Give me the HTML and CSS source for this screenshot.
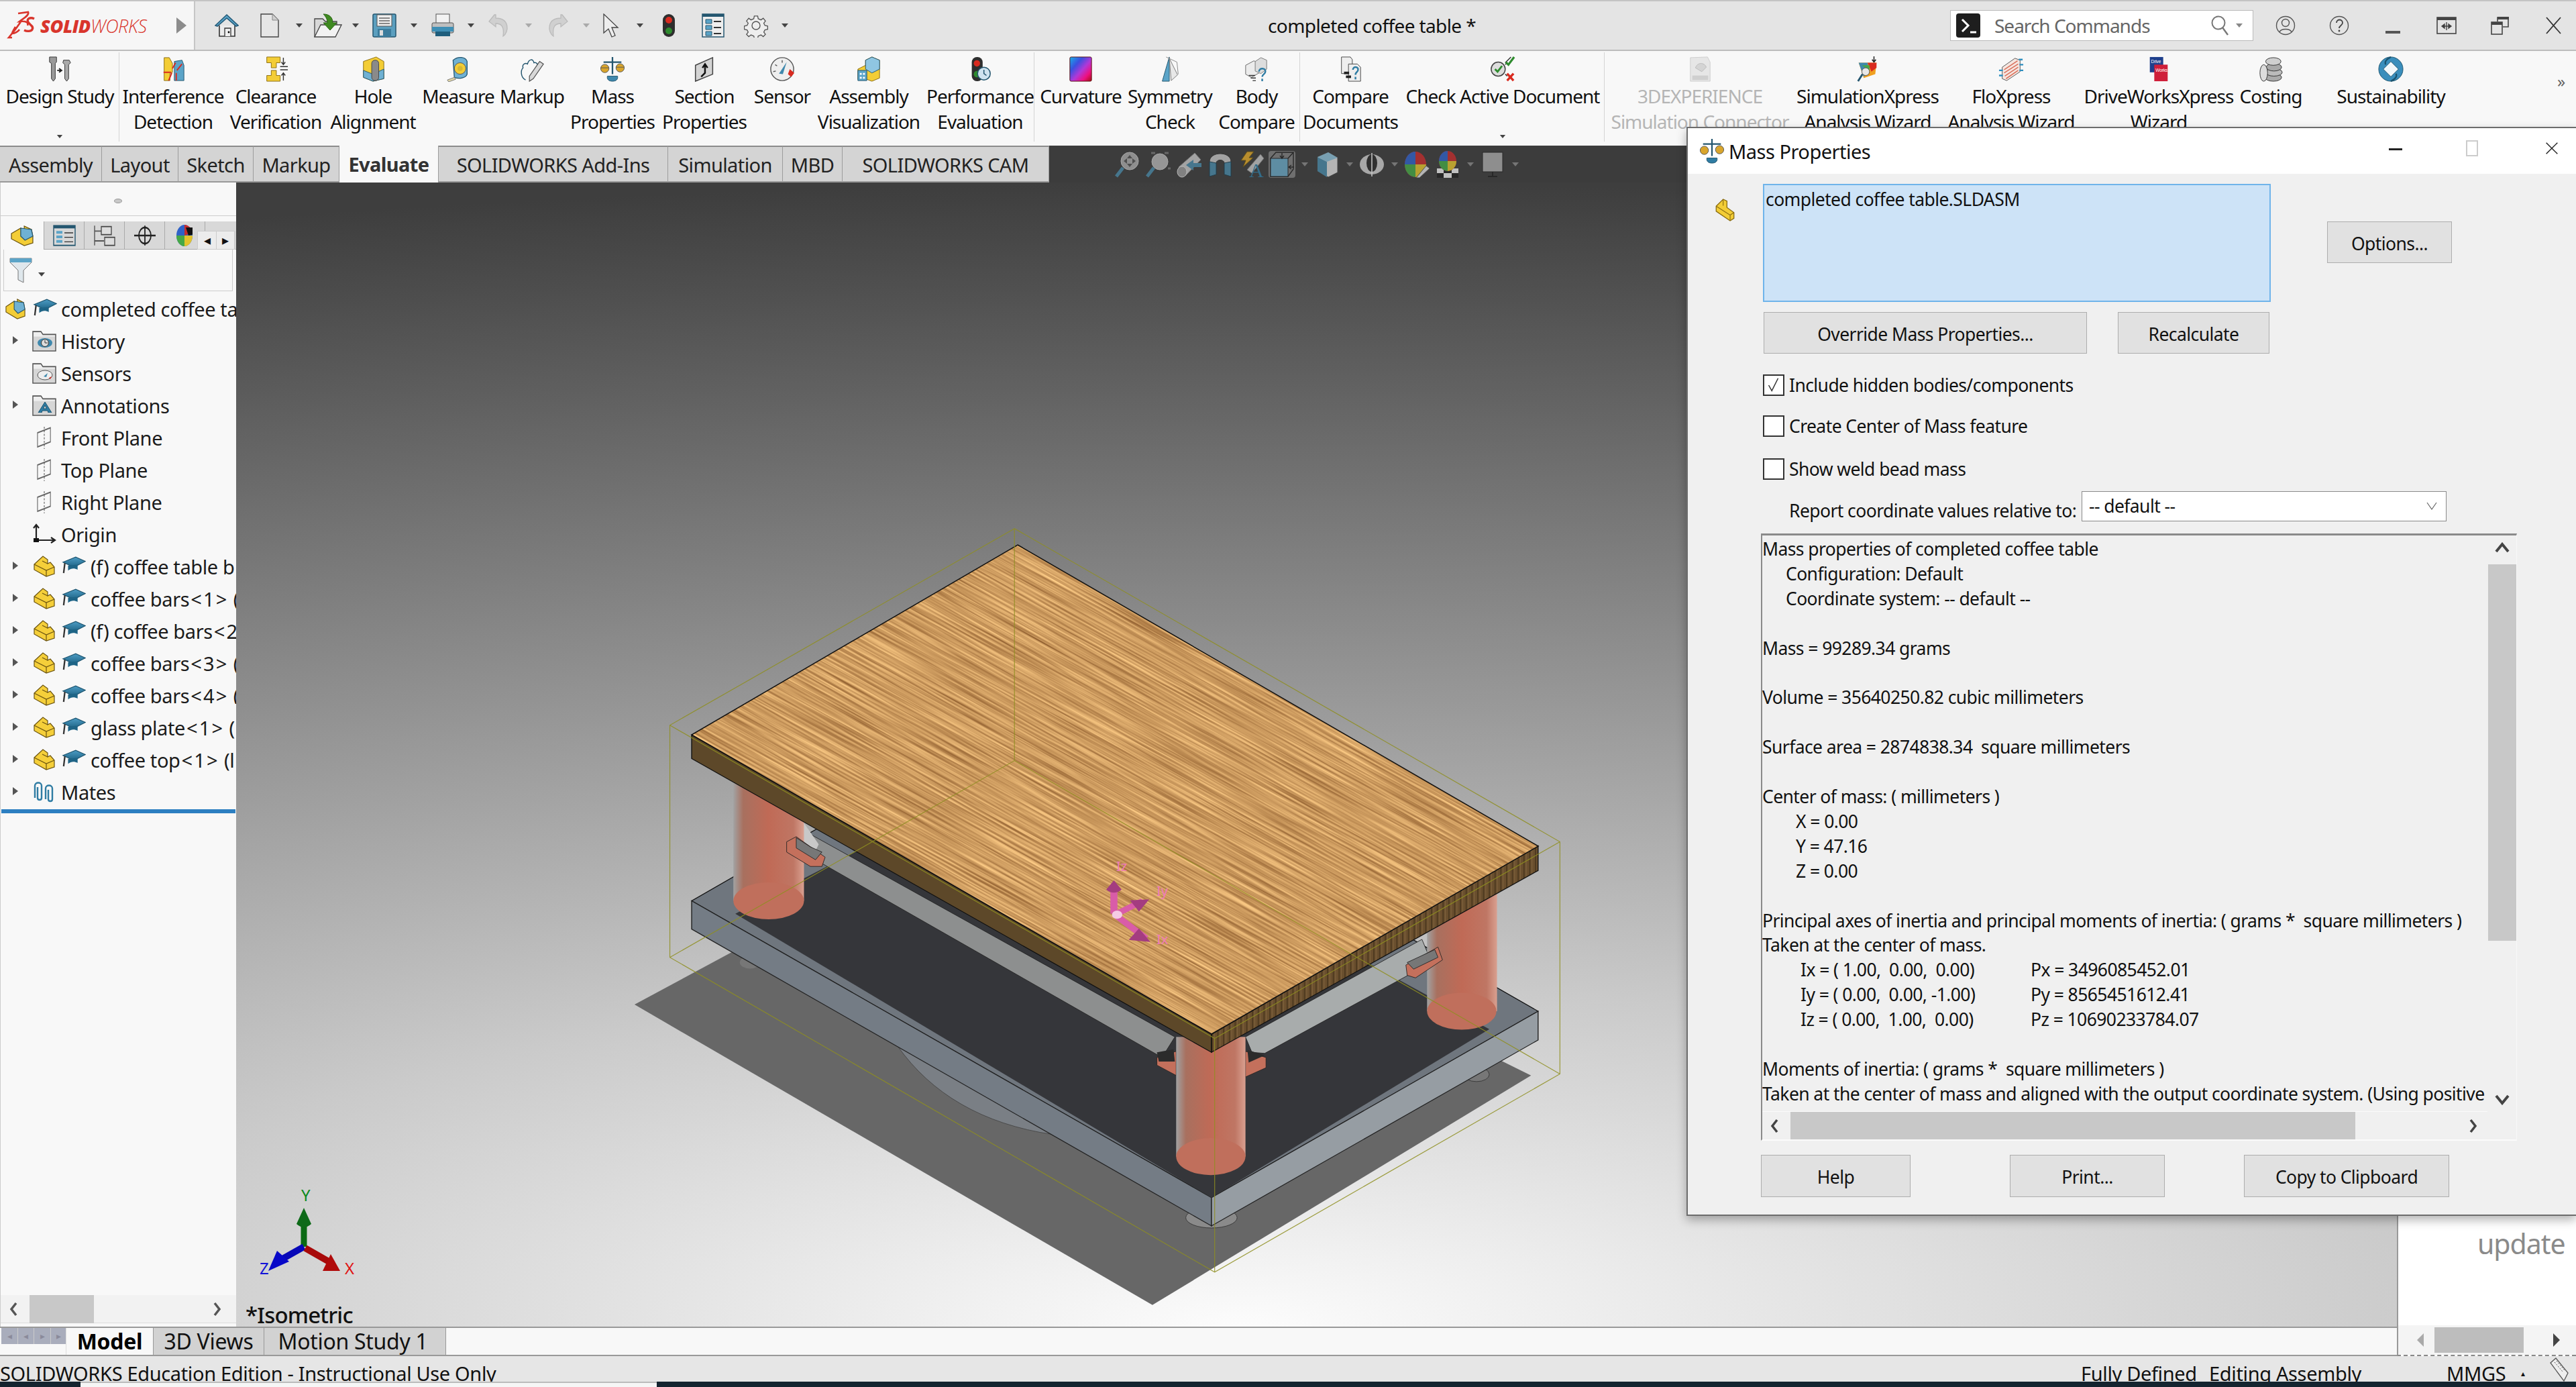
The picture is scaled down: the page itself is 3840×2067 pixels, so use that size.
FILE: index.html
```html
<!DOCTYPE html>
<html lang="en">
<head>
<meta charset="utf-8">
<title>SOLIDWORKS - completed coffee table</title>
<link rel="stylesheet" href="styles.css">
</head>
<body>
<svg class="defs" aria-hidden="true">
  <defs>
    <linearGradient id="capg" x1="0" y1="0" x2="0" y2="1"><stop offset="0" stop-color="#4d9cc4"/><stop offset="1" stop-color="#1e6486"/></linearGradient>
    <linearGradient id="rainbow" x1="0" y1="0" x2="1" y2="1"><stop offset="0" stop-color="#19b0e8"/><stop offset=".3" stop-color="#3a50e0"/><stop offset=".55" stop-color="#b038d8"/><stop offset=".78" stop-color="#ee1080"/><stop offset="1" stop-color="#a01010"/></linearGradient>
    <linearGradient id="cyl" x1="0" y1="0" x2="1" y2="0"><stop offset="0" stop-color="#a2a2a2"/><stop offset=".14" stop-color="#a8705f"/><stop offset=".5" stop-color="#c06a56"/><stop offset=".85" stop-color="#bf7664"/><stop offset="1" stop-color="#d9a090"/></linearGradient>
    <pattern id="edge" width="9" height="40" patternUnits="userSpaceOnUse"><rect width="9" height="40" fill="#6a4f2e"/><rect x="2" width="2" height="40" fill="#4e3a20"/><rect x="6" width="1" height="40" fill="#80643e"/></pattern>
    <filter id="woodgrain" x="0" y="0" width="100%" height="100%" color-interpolation-filters="sRGB">
      <feTurbulence type="fractalNoise" baseFrequency="0.006 0.36" numOctaves="3" seed="7"/>
      <feColorMatrix type="matrix" values=".6 0 0 0 .5  .6 0 0 0 .305  .48 0 0 0 .13  0 0 0 0 1"/>
    </filter>
    <clipPath id="topclip"><polygon points="1517,812 2293,1261 1806,1541 1031,1095"/></clipPath>
    <symbol id="comp" viewBox="0 0 32 32" preserveAspectRatio="none"><path d="M1 13 14 1l7 5v6l4-2 6 7v10l-12 4L1 21z" fill="#f5cf3a" stroke="#6b5410" stroke-width="1.2"/><path d="M1 13l18 9 12-5M19 22v9M13 8l8 4" fill="none" stroke="#6b5410" stroke-width="1.2"/></symbol>
    <symbol id="cap" viewBox="0 0 38 24" preserveAspectRatio="none"><path d="M2 7 22 1l15 5-18 7z" fill="url(#capg)" stroke="#1b536e"/><path d="M10 11v6c5-3 10-3 15-1v-6z" fill="#1e6486"/><path d="M5 8 3 20" stroke="#333" stroke-width="2.4"/></symbol>
    <symbol id="folder" viewBox="0 0 36 30" preserveAspectRatio="none"><path d="M1 29V2h12l3 4h19v23z" fill="#eee" stroke="#555" stroke-width="1.5"/><path d="M2 9h32v19H2z" fill="#d6d6d6"/></symbol>
    <symbol id="plane" viewBox="0 0 24 22" preserveAspectRatio="none"><path d="M1 6 22 1v14L1 20z" fill="none" stroke="#666" stroke-width="1.2"/><path d="M12 0v22" fill="none" stroke="#444" stroke-dasharray="2 1.5"/></symbol>
    <symbol id="arrowdn" viewBox="0 0 12 8"><path d="M1 1h10L6 7z"/></symbol>
  </defs>
</svg>

<header class="topbar">
  <div class="logo">
    <svg class="ds" viewBox="0 0 42 44"><path d="M17 4 32 2c2 5-8 10-13 14 9-1 14 1 12 6M22 15C16 24 10 32 3 40l5 0M13 24c-3 5-5 8-5 10 4 0 9-3 11-6" fill="none" stroke="#d9352c" stroke-width="2.6"/><path d="M41 12c-6-3-12 0-9 5 2 4 9 6 6 11-2 3-8 3-12 1" fill="none" stroke="#d9352c" stroke-width="3.4"/></svg>
    <span class="logo-b">SOLID</span><span class="logo-l">WORKS</span>
    <span class="logo-tri"></span>
  </div>
  <div class="quick">
    <svg class="qi qi-home" viewBox="0 0 36 36"><path d="M7 18v16h23V18" fill="#ececec" stroke="#333" stroke-width="1.6"/><path d="M1 18 18 2l17 16-3 1L18 7 4 19z" fill="#5ba4c8" stroke="#245a78" stroke-width="1.6"/><path d="M15 34V22h9v12" fill="#eee" stroke="#333" stroke-width="1.3"/><circle cx="21" cy="28" r="1.4"/></svg>
    <svg class="qi qi-new" viewBox="0 0 28 36"><path d="M1 1h17l9 9v25H1z" fill="#e6e6e6" stroke="#444" stroke-width="1.4"/><path d="M18 1v9h9" fill="#cfcfcf" stroke="#888"/></svg>
    <svg class="qa" viewBox="0 0 12 8"><use href="#arrowdn"/></svg>
    <svg class="qi qi-open" viewBox="0 0 42 36"><path d="M1 35V8h12l4 4h17v8" fill="#d8d8d8" stroke="#444" stroke-width="1.3"/><path d="M1 35 10 17h31l-9 18z" fill="#f2f2f2" stroke="#444" stroke-width="1.3"/><path d="M14 1c10 0 14 6 14 13h6l-10 11-10-11h6c0-5-2-9-6-13z" fill="#3f8a21" stroke="#2a6612"/></svg>
    <svg class="qa" viewBox="0 0 12 8"><use href="#arrowdn"/></svg>
    <svg class="qi qi-save" viewBox="0 0 36 36"><rect x="1" y="1" width="34" height="34" rx="2" fill="#5b9fbf" stroke="#24566f" stroke-width="1.5"/><rect x="7" y="2" width="22" height="17" fill="#eee" stroke="#555"/><path d="M10 7h16M10 11h16M10 15h16" stroke="#666" stroke-width="1.4"/><rect x="8" y="23" width="20" height="12" fill="#3c7c9c"/><rect x="11" y="25" width="5" height="8" fill="#ddd"/></svg>
    <svg class="qa" viewBox="0 0 12 8"><use href="#arrowdn"/></svg>
    <svg class="qi qi-print" viewBox="0 0 34 36"><rect x="7" y="1" width="20" height="14" fill="#f2f2f2" stroke="#555"/><rect x="1" y="14" width="32" height="15" rx="2" fill="#bfbfbf" stroke="#555"/><rect x="1" y="20" width="32" height="7" fill="#3f8fb5"/><rect x="6" y="27" width="22" height="7" fill="#1f5e7d"/></svg>
    <svg class="qa" viewBox="0 0 12 8"><use href="#arrowdn"/></svg>
    <svg class="qi qi-undo" viewBox="0 0 34 36"><path d="M10 2 2 12l10 8v-5c8 0 13 4 11 19 9-6 10-27-11-27V2z" fill="#d0d0d0" stroke="#bbb" stroke-width="1.3"/></svg>
    <svg class="qa faded" viewBox="0 0 12 8"><use href="#arrowdn"/></svg>
    <svg class="qi qi-redo" viewBox="0 0 34 36"><path d="M24 2 32 12l-10 8v-5c-8 0-13 4-11 19C2 28 1 7 22 7V2z" fill="#d0d0d0" stroke="#bbb" stroke-width="1.3"/></svg>
    <svg class="qa faded" viewBox="0 0 12 8"><use href="#arrowdn"/></svg>
    <svg class="qi qi-sel" viewBox="0 0 26 36"><path d="M2 1v28l7-6 5 12 5-2-5-12h9z" fill="#eee" stroke="#444" stroke-width="1.3"/></svg>
    <svg class="qa" viewBox="0 0 12 8"><use href="#arrowdn"/></svg>
    <svg class="qi qi-light" viewBox="0 0 20 36"><rect x="1" y="1" width="18" height="34" rx="9" fill="#2e2e2e"/><circle cx="10" cy="10" r="5" fill="#d92b20"/><circle cx="10" cy="26" r="5" fill="#2e8b2e"/></svg>
    <svg class="qi qi-list" viewBox="0 0 34 36"><rect x="1" y="1" width="32" height="34" fill="#eee" stroke="#24566f" stroke-width="1.5"/><rect x="1" y="1" width="32" height="4" fill="#24566f"/><path d="M6 9h9v6H6zM6 18h9v6H6zM6 27h9v6H6z" fill="#5ba4c8" stroke="#24566f"/><path d="M18 12h11M18 21h11M18 30h11" stroke="#333" stroke-width="2"/></svg>
    <svg class="qi qi-gear" viewBox="0 0 36 36"><path d="M15 1h6l1 5 5 2 4-3 4 5-3 4 2 4 5 1v6l-5 1-2 4 3 4-4 4-4-3-5 2-1 4h-6l-1-4-5-2-4 3-4-4 3-4-2-4-5-1v-6l5-1 2-4-3-4 4-5 4 3 5-2z" transform="translate(3 3) scale(.83)" fill="#eee" stroke="#555" stroke-width="1.6"/><circle cx="18" cy="18" r="6" fill="#eee" stroke="#555" stroke-width="1.4"/></svg>
    <svg class="qa" viewBox="0 0 12 8"><use href="#arrowdn"/></svg>
  </div>
  <div class="doc-title">completed coffee table *</div>
  <div class="search">
    <svg class="term" viewBox="0 0 36 36"><rect width="36" height="36" rx="4" fill="#1e1e1e"/><path d="M9 9l9 9-9 9" fill="none" stroke="#fff" stroke-width="3"/><path d="M21 28h9" stroke="#fff" stroke-width="3"/></svg>
    <span class="search-text">Search Commands</span>
    <svg class="mag" viewBox="0 0 28 30"><circle cx="11" cy="11" r="9.5" fill="none" stroke="#777" stroke-width="2"/><path d="M17 18l8 11" stroke="#777" stroke-width="2.4"/></svg>
    <svg class="qa sa" viewBox="0 0 12 8"><use href="#arrowdn"/></svg>
  </div>
  <div class="wins">
    <svg class="wi" viewBox="0 0 30 30"><circle cx="15" cy="15" r="13.5" fill="none" stroke="#555" stroke-width="1.4"/><circle cx="15" cy="11" r="5.5" fill="none" stroke="#555" stroke-width="1.4"/><path d="M6 25c2-6 16-6 18 0" fill="none" stroke="#555" stroke-width="1.4"/></svg>
    <svg class="wi" viewBox="0 0 30 30"><circle cx="15" cy="15" r="13.5" fill="none" stroke="#555" stroke-width="1.4"/><path d="M11 11c0-6 9-6 9 0 0 4-5 4-5 8" fill="none" stroke="#444" stroke-width="1.8"/><circle cx="15" cy="23" r="1.4" fill="#444"/></svg>
    <svg class="wi" viewBox="0 0 30 30"><rect x="4" y="23" width="22" height="4" fill="#555"/></svg>
    <svg class="wi" viewBox="0 0 30 30"><rect x="1" y="3" width="28" height="24" fill="none" stroke="#444" stroke-width="1.6"/><rect x="1" y="3" width="28" height="4" fill="#444"/><path d="M8 16h14M8 16l4-3v6zM22 16l-4-3v6zM15 10v12" stroke="#444" stroke-width="1.4"/></svg>
    <svg class="wi" viewBox="0 0 30 30"><rect x="2" y="10" width="16" height="18" fill="#e4e4e4" stroke="#444" stroke-width="1.6"/><rect x="2" y="10" width="16" height="4" fill="#444"/><path d="M11 9V3h16v14h-8" fill="none" stroke="#444" stroke-width="1.6"/><rect x="11" y="2" width="17" height="4" fill="#444"/></svg>
    <svg class="wi" viewBox="0 0 30 30"><path d="M4 3l21 24M25 3 4 27" fill="none" stroke="#333" stroke-width="1.8"/></svg>
  </div>
</header>

<nav class="ribbon">
  <div class="rb"><svg class="ri" viewBox="0 0 40 40"><path d="M4 1h11v8l-2 2v24l-3 4-3-4V11l-3-2z" fill="#999" stroke="#333"/><path d="M26 6h9l2 4-3 3v22l-3 4-3-4V13l-3-3z" fill="#aaa" stroke="#333"/><path d="M16 22h6m-3-3 4 3-4 3" fill="none" stroke="#222" stroke-width="2"/></svg><span>Design Study</span><svg class="rb-drop" viewBox="0 0 12 8"><use href="#arrowdn"/></svg></div>
  <div class="rb sep"><svg class="ri" viewBox="0 0 40 40"><path d="M6 2h8l5 9v14l-4 2v11H6z" fill="#f3cd36" stroke="#8a6d12"/><path d="M22 8l12-2 3 8v24H22z" fill="#5ba4c8" stroke="#24566f"/><path d="M24 10l-5 9M34 12l-8 10M5 25h12M18 26 13 38M25 26v12" stroke="#d92b20" stroke-width="2"/></svg><span>Interference<br>Detection</span></div>
  <div class="rb"><svg class="ri" viewBox="0 0 40 40"><path d="M6 1h21v9h-6v8h-8v-8H6z" fill="#f3cd36" stroke="#8a6d12"/><path d="M13 22h8v8h6v9H6v-9h7z" fill="#f3cd36" stroke="#8a6d12"/><path d="M32 2v10m-3-3 3 4 3-4M32 38V26m-3 4 3-4 3 4M27 16h12M27 21h12" fill="none" stroke="#333" stroke-width="1.5"/></svg><span>Clearance<br>Verification</span></div>
  <div class="rb"><svg class="ri" viewBox="0 0 40 40"><path d="M5 8 25 1l12 7v27l-17 4-15-6z" fill="#f3cd36" stroke="#8a6d12"/><path d="M5 22l15 6 17-8v15l-17 4-15-6z" fill="#6fb1d3" stroke="#24566f"/><rect x="18" y="6" width="11" height="32" rx="5" fill="#8a8a8a" stroke="#444"/></svg><span>Hole<br>Alignment</span></div>
  <div class="rb"><svg class="ri" viewBox="0 0 40 40"><path d="M12 6c8-7 20-5 22 2v20c-2 6-12 8-20 5z" fill="#6fb1d3" stroke="#24566f" stroke-width="1.4"/><circle cx="23" cy="19" r="9" fill="#f3cd36" stroke="#555"/><circle cx="23" cy="19" r="4" fill="#d8b830"/><path d="M14 33 3 37l2 3 11-4z" fill="#e4d9a8" stroke="#777"/></svg><span>Measure</span></div>
  <div class="rb"><svg class="ri" viewBox="0 0 40 40"><path d="M10 37C2 33 2 22 6 18 4 12 10 10 13 12c2-8 9-9 10-2 4-1 7 2 5 6" fill="none" stroke="#24566f" stroke-width="1.5"/><path d="M32 8l6 4-16 23-6 4 0-8z" fill="#d8d8d8" stroke="#555" stroke-width="1.3"/></svg><span>Markup</span></div>
  <div class="rb"><svg class="ri" viewBox="0 0 40 40"><path d="M20 1v27M6 9h28" stroke="#24566f" stroke-width="2.4" fill="none"/><path d="M12 31h16c1 5-2 8-8 8s-9-3-8-8z" fill="#3f88ad" stroke="#24566f"/><circle cx="8" cy="19" r="6.5" fill="#d9a52c" stroke="#555"/><circle cx="32" cy="18" r="6.5" fill="#d9a52c" stroke="#555"/><path d="M2 18h12M26 17h12" stroke="#555"/></svg><span>Mass<br>Properties</span></div>
  <div class="rb"><svg class="ri" viewBox="0 0 40 40"><path d="M6 14 33 2v26L6 39z" fill="#d4d4d4" stroke="#444" stroke-width="1.6"/><path d="M15 32 21 26V13m-4 5 4-6 4 6" fill="none" stroke="#111" stroke-width="2.6"/></svg><span>Section<br>Properties</span></div>
  <div class="rb"><svg class="ri" viewBox="0 0 40 40"><circle cx="20" cy="20" r="18" fill="#eee" stroke="#555" stroke-width="1.5"/><path d="M32 20 39 26l-5 6-5-4z" fill="#d92b20"/><path d="M15 27 27 9l-6 19z" fill="#3f88ad"/><path d="M20 6v4M9 13l3 2M6 24l4-1" stroke="#555" stroke-width="1.5"/></svg><span>Sensor</span></div>
  <div class="rb"><svg class="ri" viewBox="0 0 40 40"><path d="M3 20l12-6v-8l10-5 12 5v28l-12 5-8-3H3z" fill="#f3cd36" stroke="#8a6d12"/><path d="M25 1l12 5v14l-12 6-10-6V6z" fill="#8fc6e2" stroke="#24566f"/><path d="M3 22h14v16H3z" fill="#5ba4c8" stroke="#24566f"/><path d="M6 26h3v3H6zM11 26h3v3h-3zM6 32h3v3H6zM11 32h3v3h-3z" fill="#fff"/></svg><span>Assembly<br>Visualization</span></div>
  <div class="rb"><svg class="ri" viewBox="0 0 40 40"><rect x="7" y="1" width="17" height="38" rx="8" fill="#2e2e2e"/><circle cx="15" cy="11" r="5" fill="#d92b20"/><circle cx="15" cy="28" r="5" fill="#2e8b2e"/><circle cx="26" cy="27" r="10" fill="#cfe3ef" stroke="#24566f" stroke-width="1.6"/><path d="M26 21v6l4 3" stroke="#24566f" stroke-width="1.6" fill="none"/></svg><span>Performance<br>Evaluation</span></div>
  <div class="rb sep"><svg class="ri" viewBox="0 0 40 40"><rect x="3" y="1" width="34" height="38" rx="2" fill="url(#rainbow)" stroke="#5a1010"/></svg><span>Curvature</span></div>
  <div class="rb"><svg class="ri" viewBox="0 0 40 40"><path d="M19 1v38H8z" fill="#5ba4c8" stroke="#24566f"/><path d="M19 3l13 26-10 9z" fill="#e8e8e8" stroke="#777"/><path d="M14 1l17 8 2 19" fill="none" stroke="#888"/></svg><span>Symmetry<br>Check</span></div>
  <div class="rb"><svg class="ri" viewBox="0 0 40 40"><path d="M3 14 16 7l8 4v15l-12 7-9-5z" fill="#ececec" stroke="#666"/><path d="M18 8 27 2l9 4v14l-9 7-9-4z" fill="#ddd" stroke="#777"/><path d="M24 24c0-7 11-6 10 0 0 4-5 4-5 8M29 35v4" fill="none" stroke="#2f7ca3" stroke-width="2.6"/><path d="M8 30h10M11 34h8M14 38h5" stroke="#333" stroke-width="1.5"/></svg><span>Body<br>Compare</span></div>
  <div class="rb sep"><svg class="ri" viewBox="0 0 40 40"><path d="M6 1h14l3 4v22H6z" fill="#eee" stroke="#444"/><path d="M17 12h14l5 5v22H17z" fill="#eee" stroke="#444"/><path d="M22 21c0-6 9-5 8 0 0 4-4 3-4 8M26 32v4" fill="none" stroke="#2f7ca3" stroke-width="2.6" transform="translate(2)"/><rect x="10" y="24" width="8" height="4" fill="#222"/><rect x="13" y="30" width="8" height="4" fill="#222"/></svg><span>Compare<br>Documents</span></div>
  <div class="rb"><svg class="ri" viewBox="0 0 40 40"><circle cx="13" cy="20" r="11" fill="#ddd" stroke="#444" stroke-width="1.6"/><path d="M8 20l4 4 7-9" fill="none" stroke="#2e8b2e" stroke-width="3"/><path d="M24 10 33 1M24 13l3-3M27 31l-3-3" stroke="#333" stroke-width="1.5"/><path d="M25 9l4 4 9-12" fill="none" stroke="#2e8b2e" stroke-width="3.4"/><path d="M27 27l10 11M37 27 27 38" stroke="#d92b20" stroke-width="3.6"/></svg><span>Check Active Document</span><svg class="rb-drop" viewBox="0 0 12 8"><use href="#arrowdn"/></svg></div>
  <div class="rb sep off"><svg class="ri" viewBox="0 0 40 40"><path d="M5 2 32 1l4 8v30H5z" fill="#e6e6e6" stroke="#cdcdcd"/><path d="M13 18c3-9 14-9 17-1l-7 7z" fill="#d4d4d4" stroke="#bbb"/><rect x="8" y="30" width="25" height="7" fill="#cfcfcf"/></svg><span>3DEXPERIENCE<br>Simulation Connector</span></div>
  <div class="rb"><svg class="ri" viewBox="0 0 40 40"><path d="M6 10h28l-2 18-18 6z" fill="#f0a020"/><path d="M6 10h14l2 14-8 8z" fill="#3f88ad"/><path d="M20 10h14v8l-8 6z" fill="#d92b20"/><path d="M11 14h12v8z" fill="#46a846"/><circle cx="17" cy="24" r="6" fill="#e8e8e8" stroke="#555"/><path d="M12 28 5 39" stroke="#24566f" stroke-width="3"/><path d="M30 0v8m-3-3 3 4 3-4" stroke="#222" stroke-width="1.6" fill="none"/></svg><span>SimulationXpress<br>Analysis Wizard</span></div>
  <div class="rb"><svg class="ri" viewBox="0 0 40 40"><path d="M6 17 26 3l8 3v18L13 38l-7-3z" fill="#f6e6e0" stroke="#555"/><path d="M9 21 30 7M9 26 31 12M10 31 31 17M12 35 31 22" stroke="#d9705c" stroke-width="1.6"/><path d="M32 5h6M33 13h6M33 22h6M1 22h6M1 30h6" stroke="#2f8fc0" stroke-width="2.4"/></svg><span>FloXpress<br>Analysis Wizard</span></div>
  <div class="rb"><svg class="ri" viewBox="0 0 40 40"><rect x="6" y="1" width="21" height="24" fill="#1e3f8c"/><rect x="13" y="13" width="21" height="26" fill="#cf1f3a"/><text class="dw" x="8" y="10">Drive</text><text class="dw" x="15" y="24">Works</text></svg><span>DriveWorksXpress<br>Wizard</span></div>
  <div class="rb"><svg class="ri" viewBox="0 0 40 40"><ellipse cx="24" cy="33" rx="13" ry="6" fill="#aaa" stroke="#333"/><ellipse cx="25" cy="25" rx="13" ry="6" fill="#bbb" stroke="#333"/><ellipse cx="25" cy="17" rx="12" ry="6" fill="#a8a8a8" stroke="#333"/><ellipse cx="24" cy="8" rx="12" ry="6" fill="#cfcfcf" stroke="#333"/><ellipse cx="9" cy="26" rx="6" ry="13" fill="#ddd" stroke="#333"/></svg><span>Costing</span></div>
  <div class="rb"><svg class="ri" viewBox="0 0 40 40"><circle cx="20" cy="20" r="19" fill="#3a8ebc" stroke="#1b536e"/><path d="M20 8 8 20l12 12 12-12z" fill="#f2f8fb" stroke="#1b536e"/><path d="M20 1C12 5 10 9 12 13M20 39c8-4 10-8 8-12" stroke="#1b536e" stroke-width="2.4" fill="none"/></svg><span>Sustainability</span></div>
  <div class="rb-more">»</div>
</nav>

<div class="tabrow">
  <div class="tabs">
    <div class="tab">Assembly</div><div class="tab">Layout</div><div class="tab">Sketch</div><div class="tab">Markup</div><div class="tab active">Evaluate</div><div class="tab">SOLIDWORKS Add-Ins</div><div class="tab">Simulation</div><div class="tab">MBD</div><div class="tab">SOLIDWORKS CAM</div>
  </div>
  <div class="viewbar">
    <svg class="vi" viewBox="0 0 40 40"><circle cx="23" cy="15" r="13" fill="#aaa" stroke="#ccc"/><path d="M23 6l4 5h-8zM23 24l4-5h-8zM14 15l5-4v8zM32 15l-5-4v8z" fill="#555"/><path d="M13 25 3 38" stroke="#4a8aa8" stroke-width="5"/></svg>
    <svg class="vi" viewBox="0 0 40 40"><circle cx="22" cy="16" r="12" fill="#b5b5b5" stroke="#ccc"/><path d="M13 25 3 38" stroke="#4a8aa8" stroke-width="5"/><path d="M9 3h6M29 3h6M34 26h4" stroke="#777" stroke-width="3"/></svg>
    <svg class="vi" viewBox="0 0 40 40"><path d="M4 24 28 3l9 10-23 24z" fill="#c6c6c6" stroke="#888"/><ellipse cx="9" cy="31" rx="7" ry="8" fill="#999" stroke="#ddd"/><path d="M18 24h20v-6H26l0-5-11 8 11 8v-5z" fill="#4a8aa8"/></svg>
    <svg class="vi" viewBox="0 0 40 40"><path d="M4 38V16C4 0 36 0 36 16v22l-10-3V18c0-6-12-6-12 0v18z" fill="#c4c4c4" stroke="#333"/><path d="M4 16v22l10-3V18zM26 18v17l10 3V16z" fill="#4a8aa8" stroke="#1b3f50"/></svg>
    <svg class="vi" viewBox="0 0 40 40"><path d="M14 28 34 5l5 6-18 22z" fill="#c4c4c4" stroke="#888"/><path d="M14 1h10l-7 9h6L8 24l4-10H5z" fill="#e0a82a" stroke="#6b5410"/><text class="vi-a" x="17" y="39">A</text></svg>
    <span class="vi-on"><svg class="vi" viewBox="0 0 40 40"><path d="M3 11 11 2h26v25l-8 11H3z" fill="none" stroke="#222" stroke-width="1.4"/><rect x="3" y="11" width="26" height="27" fill="#6aa9c6" stroke="#222"/><path d="M29 11l8-9M20 3v7m-3-3 3 4 3-4M38 24h-7m3-3-4 3 4 3" stroke="#222" stroke-width="1.4" fill="none"/></svg></span>
    <svg class="vd" viewBox="0 0 12 8"><use href="#arrowdn"/></svg>
    <svg class="vi" viewBox="0 0 40 40"><path d="M6 9 22 2l14 8v22l-14 7L6 30z" fill="#ddd" stroke="#444"/><path d="M6 9l14 7v23L6 30z" fill="#4a8aa8"/><path d="M6 9 22 2l14 8-16 6z" fill="#8cc0d8"/></svg>
    <svg class="vd" viewBox="0 0 12 8"><use href="#arrowdn"/></svg>
    <svg class="vi" viewBox="0 0 40 40"><ellipse cx="20" cy="20" rx="18" ry="15" fill="#ccc"/><ellipse cx="20" cy="18" rx="8" ry="13" fill="#2c2c2c"/><path d="M20 3v35" stroke="#eee" stroke-width="1.6"/></svg>
    <svg class="vd" viewBox="0 0 12 8"><use href="#arrowdn"/></svg>
    <svg class="vi" viewBox="0 0 40 40"><ellipse cx="18" cy="20" rx="16" ry="19" fill="#c62c2c"/><path d="M18 1a16 19 0 0 0-16 19h16z" fill="#2f62c8"/><path d="M2 20a16 19 0 0 0 16 19V20z" fill="#46a846"/><path d="M18 20v19a16 19 0 0 0 16-19z" fill="#e3c32c"/><path d="M34 22 39 26 24 40l-5 0z" fill="#ddd" stroke="#555"/></svg>
    <svg class="vi" viewBox="0 0 40 40"><path d="M4 26h10v7H4zM26 26h10v7H26zM14 33h12v7H14z" fill="#eee"/><path d="M14 26h12v7H14zM4 33h10v7H4zM26 33h10v7H26z" fill="#222"/><ellipse cx="20" cy="15" rx="13" ry="15" fill="#c62c2c"/><path d="M20 0A13 15 0 0 0 7 15h13z" fill="#2f62c8"/><path d="M7 15a13 15 0 0 0 13 15V15z" fill="#46a846"/><path d="M20 15v15a13 15 0 0 0 13-15z" fill="#e3c32c"/></svg>
    <svg class="vd" viewBox="0 0 12 8"><use href="#arrowdn"/></svg>
    <svg class="vi" viewBox="0 0 40 40"><rect x="5" y="2" width="30" height="29" fill="#aaa" stroke="#222"/><path d="M20 31v6M13 38h14" stroke="#222" stroke-width="2"/></svg>
    <svg class="vd" viewBox="0 0 12 8"><use href="#arrowdn"/></svg>
  </div>
</div>

<main class="work">
  <aside class="panel">
    <div class="panel-head"><i class="dimple"></i></div>
    <div class="ptabs">
      <div class="ptab on"><svg class="pi" viewBox="0 0 32 32" preserveAspectRatio="none"><path d="M1 13 14 5l5 2V2l10 5 2 10v10l-12 4L1 21z" fill="#f3cd36" stroke="#6b5410" stroke-width="1.2"/><path d="M14 5 29 7l2 10-11 6-6-6z" fill="#6fb1d3" stroke="#24566f" stroke-width="1.2"/></svg></div>
      <div class="ptab"><svg class="pi" viewBox="0 0 34 24" preserveAspectRatio="none"><rect x="1" y="1" width="32" height="22" fill="none" stroke="#24566f" stroke-width="1.4"/><rect x="1" y="1" width="32" height="3" fill="#24566f"/><path d="M5 7h9v3H5zM5 12h9v3H5zM5 17h9v3H5z" fill="#5ba4c8"/><path d="M17 9h13M17 14h13M17 19h13" stroke="#333"/></svg></div>
      <div class="ptab"><svg class="pi" viewBox="0 0 34 24" preserveAspectRatio="none"><path d="M2 1v22M2 7h10M2 18h14" stroke="#555" fill="none" stroke-width="1.4"/><rect x="12" y="2" width="15" height="9" fill="#ddd" stroke="#444" stroke-width="1.3"/><rect x="17" y="14" width="15" height="9" fill="#ddd" stroke="#444" stroke-width="1.3"/></svg></div>
      <div class="ptab"><svg class="pi" viewBox="0 0 34 24" preserveAspectRatio="none"><circle cx="17" cy="12" r="9" fill="none" stroke="#222" stroke-width="1.8"/><path d="M1 12h32M17 1v22" stroke="#222" stroke-width="1.8"/></svg></div>
      <div class="ptab"><svg class="pi" viewBox="0 0 34 24" preserveAspectRatio="none"><circle cx="16" cy="12" r="12" fill="#2f62c8"/><path d="M16 0a12 12 0 0 1 12 9l-12 3z" fill="#c62c2c"/><path d="M4 12a12 12 0 0 0 12 12V12z" fill="#46a846"/><path d="M16 12v12a12 12 0 0 0 12-12z" fill="#e3c32c"/><path d="M18 3 28 3v8l-6 1z" fill="#111"/></svg></div>
      <div class="ptab last"></div>
      <div class="pnav"><span>◂</span><span>▸</span></div>
    </div>
    <div class="filter">
      <svg class="funnel" viewBox="0 0 34 38"><path d="M1 1h32v6L21 19v18l-8-4V19L1 7z" fill="#dfe7ec" stroke="#777"/><path d="M1 1h32v6H1z" fill="#5ba4c8"/></svg>
      <svg class="qa fa" viewBox="0 0 12 8"><use href="#arrowdn"/></svg>
    </div>
    <ul class="tree">
      <li class="root"><svg class="ti asm" viewBox="0 0 32 32" preserveAspectRatio="none"><path d="M1 13 14 5l5 2V2l10 5 2 10v10l-12 4L1 21z" fill="#f3cd36" stroke="#6b5410" stroke-width="1.2"/><path d="M14 5 29 7l2 10-11 6-6-6z" fill="#6fb1d3" stroke="#24566f" stroke-width="1.2"/></svg><svg class="ti cap1"><use href="#cap"/></svg><span>completed coffee table</span></li>
      <li class="tw"><svg class="ti fold"><use href="#folder"/></svg><svg class="badge" viewBox="0 0 24 16"><ellipse cx="12" cy="8" rx="11" ry="7" fill="#3f88ad"/><circle cx="12" cy="8" r="5.5" fill="#ddd" stroke="#333"/><path d="M12 4v4h4" stroke="#333" fill="none"/></svg><span>History</span></li>
      <li><svg class="ti fold"><use href="#folder"/></svg><svg class="badge" viewBox="0 0 24 16"><ellipse cx="12" cy="8" rx="11" ry="7" fill="#eee" stroke="#555"/><path d="M10 10 16 5l-2 6z" fill="#3f88ad"/><path d="M18 12l4-2-2 4z" fill="#d92b20"/></svg><span>Sensors</span></li>
      <li class="tw"><svg class="ti fold"><use href="#folder"/></svg><svg class="badge" viewBox="0 0 24 16"><path d="M2 16 12 0l10 16h-5l-1-3H8l-1 3zM9.5 10h5L12 5z" fill="#2f7ca3" stroke="#1b536e"/></svg><span>Annotations</span></li>
      <li><svg class="ti pln"><use href="#plane"/></svg><span>Front Plane</span></li>
      <li><svg class="ti pln"><use href="#plane"/></svg><span>Top Plane</span></li>
      <li><svg class="ti pln"><use href="#plane"/></svg><span>Right Plane</span></li>
      <li><svg class="ti fold" viewBox="0 0 36 30"><path d="M6 2v22h28M2 6l4-5 4 5M28 20l6 4-6 4" fill="none" stroke="#222" stroke-width="2.2"/><rect x="2" y="21" width="8" height="6" fill="#111"/></svg><span>Origin</span></li>
      <li class="tw c"><svg class="ti cmp"><use href="#comp"/></svg><svg class="ti capm"><use href="#cap"/></svg><span>(f) coffee table b</span></li>
      <li class="tw c"><svg class="ti cmp"><use href="#comp"/></svg><svg class="ti capm"><use href="#cap"/></svg><span>coffee bars<b class="n">&lt;1&gt;</b> (</span></li>
      <li class="tw c"><svg class="ti cmp"><use href="#comp"/></svg><svg class="ti capm"><use href="#cap"/></svg><span>(f) coffee bars<b class="n">&lt;2</b></span></li>
      <li class="tw c"><svg class="ti cmp"><use href="#comp"/></svg><svg class="ti capm"><use href="#cap"/></svg><span>coffee bars<b class="n">&lt;3&gt;</b> (</span></li>
      <li class="tw c"><svg class="ti cmp"><use href="#comp"/></svg><svg class="ti capm"><use href="#cap"/></svg><span>coffee bars<b class="n">&lt;4&gt;</b> (</span></li>
      <li class="tw c"><svg class="ti cmp"><use href="#comp"/></svg><svg class="ti capm"><use href="#cap"/></svg><span>glass plate<b class="n">&lt;1&gt;</b> (</span></li>
      <li class="tw c"><svg class="ti cmp"><use href="#comp"/></svg><svg class="ti capm"><use href="#cap"/></svg><span>coffee top<b class="n">&lt;1&gt;</b> (l</span></li>
      <li class="tw"><svg class="ti fold" viewBox="0 0 36 30"><path d="M4 24V6c0-6 10-6 10 0v18c0 4-6 4-6 0V8M20 26V10c0-6 10-6 10 0v16c0 4-6 4-6 0V12" fill="none" stroke="#2f7ca3" stroke-width="2.4"/></svg><span>Mates</span></li>
    </ul>
    <div class="rollback"></div>
    <div class="pscroll"><svg class="chev" viewBox="0 0 14 22"><path d="M10 2 3 11l7 9" fill="none" stroke="#555" stroke-width="3.5"/></svg><i class="pthumb"></i><svg class="chev r" viewBox="0 0 14 22"><path d="M4 2l7 9-7 9" fill="none" stroke="#555" stroke-width="3.5"/></svg></div>
    <div class="panel-handle"><i class="dimple"></i></div>
  </aside>

  <section class="viewport">
    <svg class="scene" viewBox="352 272 3488 1705">
      <g transform="translate(900 780) scale(.9566 .7653)">
        <polygon points="48,937 855,1522 1445,1075 1000,800 400,700" fill="#676767"/>
        <ellipse cx="228" cy="855" rx="16" ry="12" fill="#777"/>
        <ellipse cx="1360" cy="1073" rx="20" ry="14" fill="#777" stroke="#333"/>
        <ellipse cx="947" cy="1352" rx="40" ry="20" fill="#8a8a8a" stroke="#333"/>
        <path d="M458 1018C510 1110 590 1170 700 1190L760 1230 520 1060z" fill="#7a7f85" stroke="#444"/>
        <polygon points="137,735 645,370 1456,950 947,1313" fill="#6f767e" stroke="#111" stroke-width="1.5"/>
        <polygon points="137,735 947,1313 947,1368 137,790" fill="#747c85" stroke="#222" stroke-width="1.5"/>
        <polygon points="947,1313 1456,950 1456,1006 947,1368" fill="#969da3" stroke="#222" stroke-width="1.5"/>
        <polygon points="205,760 640,480 1380,985 947,1313" fill="#35363a"/>
        <polygon points="300,590 890,1000 870,1040 330,655 300,640" fill="#8d8f8f" stroke="#222"/>
        <polygon points="310,580 335,625 325,650 300,630" fill="#c8c8c8"/>
        <polygon points="1000,1000 1275,810 1290,855 1030,1032 1010,1030" fill="#a8acac" stroke="#222"/>
        <rect x="202" y="490" width="110" height="245" fill="url(#cyl)"/><ellipse cx="257" cy="735" rx="55" ry="36" fill="#c06f5c"/>
        <rect x="1283" y="705" width="109" height="245" fill="url(#cyl)"/><ellipse cx="1337" cy="950" rx="54" ry="36" fill="#c06f5c"/>
        <path d="M285 620 300 610 345 650 340 668 322 668 285 640z" fill="#c4705c" stroke="#222"/>
        <path d="M300 612 322 630 340 640 330 655 300 632z" fill="#777" stroke="#222"/>
        <path d="M1250 860 1300 825 1307 850 1265 885 1252 880z" fill="#c4705c" stroke="#222"/>
        <path d="M1252 855 1295 830 1300 845 1262 868z" fill="#777" stroke="#222"/>
        <path d="M862 1040 892 1028 892 1075 862 1055z" fill="#c4705c" stroke="#222"/>
        <path d="M1000 1028 1032 1040 1032 1060 1000 1078z" fill="#c4705c" stroke="#222"/>
        <path d="M862 1030 888 1024 890 1048 865 1048z" fill="#2b2b2b"/>
        <path d="M1003 1025 1030 1036 1005 1050z" fill="#2b2b2b"/>
        <rect x="892" y="1000" width="108" height="233" fill="url(#cyl)"/><ellipse cx="946" cy="1233" rx="54" ry="36" fill="#c06f5c"/>
        <polygon points="137,412 947,995 947,1030 137,458" fill="#5d4829" stroke="#111" stroke-width="1.5"/>
        <polygon points="947,995 1456,628 1456,676 947,1030" fill="url(#edge)" stroke="#111" stroke-width="1.5"/>
      </g>
      <g clip-path="url(#topclip)"><rect class="wood" x="760" y="380" width="1800" height="1600" filter="url(#woodgrain)" transform="rotate(29 1660 1180)"/></g>
      <polygon class="topline" points="1517,812 2293,1261 1806,1541 1031,1095"/>
      <g transform="translate(900 780) scale(.9566 .7653)">
        <path class="bbox" d="M640 10 103 393V845L952 1458 1490 1072V620ZM640 10V462M103 845 640 462 1490 1072M103 393 952 1003 1490 620M952 1003V1458"/>
        <path d="M795 760V710M800 760 840 735M800 765 845 808" stroke="#d95ca8" stroke-width="11" fill="none"/>
        <path d="M795 695l-12 18q12 12 24 0zM850 732l-30 2 14 22zM852 815l-34-4 16-22z" fill="#a43c80"/>
        <circle cx="800" cy="762" r="8" fill="#f5cbe4"/>
      </g>
      <text class="tri-pink" x="1664" y="1298">Iz</text><text class="tri-pink" x="1724" y="1335">Iy</text><text class="tri-pink" x="1724" y="1407">Ix</text>
      <path d="M453 1858V1815" stroke="#0b6a14" stroke-width="9"/><path d="M453 1800l-11 24q11 10 22 0z" fill="#0d6a18"/>
      <path d="M453 1858 414 1880" stroke="#0808b8" stroke-width="10"/><path d="M400 1894l13-30 18 16z" fill="#0808c8"/>
      <path d="M455 1860 490 1880" stroke="#a80a0a" stroke-width="10"/><path d="M507 1894h-26l12-25z" fill="#b00a0a"/>
      <text class="ax y" x="449" y="1790">Y</text><text class="ax z" x="387" y="1899">Z</text><text class="ax x" x="514" y="1899">X</text>
    </svg>
    <div class="viewname">*Isometric</div>
  </section>
</main>

<div class="sheets">
  <div class="sheet-nav"><i>◂</i><i>◂</i><i>▸</i><i>▸</i></div>
  <div class="sheet on">Model</div><div class="sheet s3d">3D Views</div><div class="sheet smo">Motion Study 1</div>
</div>
<footer class="status">
  <span>SOLIDWORKS Education Edition - Instructional Use Only</span>
  <span class="st-a">Fully Defined</span><span class="st-b">Editing Assembly</span><span class="st-c">MMGS</span><span class="st-d">▴</span>
  <svg class="st-i" viewBox="0 0 30 36"><path d="M2 8 10 1l18 22-6 12z" fill="#eee" stroke="#555" stroke-width="1.3"/><path d="M8 7l12 14M11 5l12 14" stroke="#555" stroke-dasharray="2 2"/></svg>
</footer>
<div class="taskbar"><i class="tb-d"></i><i class="tb-l"></i><i class="tb-r"></i></div>

<aside class="behind">
  <div class="update">update</div>
  <div class="bscroll"><i class="bl"></i><i class="bthumb"></i><i class="br"></i></div>
</aside>

<section class="dialog">
  <div class="dlg-title">
    <svg class="dlg-ic" viewBox="0 0 40 40"><path d="M20 1v27M6 9h28" stroke="#24566f" stroke-width="2.4" fill="none"/><path d="M12 31h16c1 5-2 8-8 8s-9-3-8-8z" fill="#2f7ca3" stroke="#24566f"/><circle cx="8" cy="19" r="6.5" fill="#d9a52c" stroke="#555"/><circle cx="32" cy="18" r="6.5" fill="#d9a52c" stroke="#555"/></svg>
    <span class="dlg-name">Mass Properties</span>
    <span class="dlg-min"></span><span class="dlg-max"></span>
    <svg class="dlg-x" viewBox="0 0 24 24"><path d="M2 2l20 20M22 2 2 22" stroke="#222" stroke-width="1.8"/></svg>
  </div>
  <div class="dlg-body">
    <div class="sel-row">
      <svg class="sel-ic" viewBox="0 0 34 36"><path d="M3 12 14 1l6 3v10l11 8v9l-6 4L3 20z" fill="#f3cd36" stroke="#8a6d12" stroke-width="1.4"/><path d="M3 12l22 14v9M14 1v10M25 26l6-4" fill="none" stroke="#8a6d12" stroke-width="1.2"/></svg>
      <div class="selbox">completed coffee table.SLDASM</div>
      <button class="btn opt">Options...</button>
    </div>
    <div class="ov-row"><button class="btn ov">Override Mass Properties...</button><button class="btn rc">Recalculate</button></div>
    <label class="chk c1"><i class="box"><svg viewBox="0 0 30 30"><path d="M7 15l5 9L22 4" fill="none" stroke="#333" stroke-width="1.6"/></svg></i>Include hidden bodies/components</label>
    <label class="chk c2"><i class="box"></i>Create Center of Mass feature</label>
    <label class="chk c3"><i class="box"></i>Show weld bead mass</label>
    <div class="report"><span>Report coordinate values relative to:</span><div class="combo"><span>-- default --</span><svg viewBox="0 0 16 12"><path d="M1 1l7 10 7-10" fill="none" stroke="#666" stroke-width="1.2"/></svg></div></div>
    <div class="results">
      <div class="res-top">
        <div class="res-text">
          <div>Mass properties of completed coffee table</div>
          <div class="in1">Configuration: Default</div>
          <div class="in1">Coordinate system: -- default --</div>
          <div class="gap"></div>
          <div>Mass = 99289.34 grams</div>
          <div class="gap"></div>
          <div>Volume = 35640250.82 cubic millimeters</div>
          <div class="gap"></div>
          <div>Surface area = 2874838.34&nbsp; square millimeters</div>
          <div class="gap"></div>
          <div>Center of mass: ( millimeters )</div>
          <div class="in2">X = 0.00</div>
          <div class="in2">Y = 47.16</div>
          <div class="in2">Z = 0.00</div>
          <div class="gap"></div>
          <div>Principal axes of inertia and principal moments of inertia: ( grams *&nbsp; square millimeters )</div>
          <div>Taken at the center of mass.</div>
          <div class="in3"><span>Ix = ( 1.00,&nbsp; 0.00,&nbsp; 0.00)</span><span>Px = 3496085452.01</span></div>
          <div class="in3"><span>Iy = ( 0.00,&nbsp; 0.00, -1.00)</span><span>Py = 8565451612.41</span></div>
          <div class="in3"><span>Iz = ( 0.00,&nbsp; 1.00,&nbsp; 0.00)</span><span>Pz = 10690233784.07</span></div>
          <div class="gap"></div>
          <div>Moments of inertia: ( grams *&nbsp; square millimeters )</div>
          <div>Taken at the center of mass and aligned with the output coordinate system. (Using positive tensor notation.)</div>
        </div>
        <div class="vscroll">
          <svg class="sa-up" viewBox="0 0 22 16"><path d="M2 14 11 3l9 11" fill="none" stroke="#444" stroke-width="4"/></svg>
          <i class="vthumb"></i>
          <svg class="sa-dn" viewBox="0 0 22 16"><path d="M2 2l9 11 9-11" fill="none" stroke="#444" stroke-width="4"/></svg>
        </div>
      </div>
      <div class="hscroll">
        <svg class="chev" viewBox="0 0 14 22"><path d="M10 2 3 11l7 9" fill="none" stroke="#444" stroke-width="3.5"/></svg>
        <i class="hthumb"></i>
        <svg class="chev" viewBox="0 0 14 22"><path d="M4 2l7 9-7 9" fill="none" stroke="#444" stroke-width="3.5"/></svg>
      </div>
    </div>
    <div class="dlg-btns"><button class="btn help">Help</button><button class="btn prt">Print...</button><button class="btn cpy">Copy to Clipboard</button></div>
  </div>
</section>
</body>
</html>
```

FILE: styles.css
```css
* { box-sizing: border-box; }
html, body { margin: 0; padding: 0; }
body {
  width: 3840px; height: 2067px; overflow: hidden; position: relative;
  display: flex; flex-direction: column;
  font-family: "Noto Sans", "Open Sans", sans-serif;
  font-size: 29px; letter-spacing: -.6px; color: #111; background: #e4e4e4;
}
.defs { position: absolute; width: 0; height: 0; }
i { display: block; font-style: normal; }

/* title bar */
.topbar { height: 76px; flex: none; display: flex; align-items: center; background: #e4e4e4; border-top: 2px solid #c4c4c4; border-bottom: 2px solid #bdbdbd; position: relative; }
.logo { width: 291px; height: 72px; flex: none; display: flex; align-items: center; background: #f6f6f6; border-right: 2px solid #c6c6c6; padding-left: 10px; color: #d9352c; font-style: italic; font-family: "Open Sans", sans-serif; font-size: 27px; letter-spacing: -.4px; }
.ds { width: 42px; height: 44px; margin-right: 8px; flex: none; }
.logo-b { font-weight: 800; }
.logo-l { font-weight: 300; }
.logo-tri { width: 0; height: 0; margin-left: 44px; border-left: 15px solid #8c8c8c; border-top: 12px solid transparent; border-bottom: 12px solid transparent; }
.quick { display: flex; align-items: center; padding-left: 29px; width: 1590px; flex: none; }
.qi { height: 36px; flex: none; }
.qi-home { width: 36px; }
.qi-new { width: 28px; margin-left: 32px; }
.qa { width: 12px; height: 8px; flex: none; fill: #444; }
.qa.faded { fill: #aaa; }
.qi-new + .qa { margin-left: 24px; }
.qi-open { width: 42px; margin-left: 16px; }
.qi-open + .qa { margin-left: 14px; }
.qi-save { width: 36px; margin-left: 19px; }
.qi-save + .qa { margin-left: 20px; }
.qi-print { width: 34px; margin-left: 20px; }
.qi-print + .qa { margin-left: 19px; }
.qi-undo { width: 34px; margin-left: 19px; }
.qi-undo + .qa { margin-left: 21px; }
.qi-redo { width: 34px; margin-left: 20px; }
.qi-redo + .qa { margin-left: 20px; }
.qi-sel { width: 26px; margin-left: 18px; }
.qi-sel + .qa { margin-left: 24px; }
.qi-light { width: 20px; margin-left: 27px; }
.qi-list { width: 34px; margin-left: 39px; }
.qi-gear { width: 36px; margin-left: 29px; }
.qi-gear + .qa { margin-left: 19px; }
.doc-title { width: 1026px; flex: none; padding-left: 9px; font-size: 28px; letter-spacing: -.6px; }
.search { width: 452px; height: 46px; flex: none; background: #fff; border: 1px solid #bbb; display: flex; align-items: center; padding-left: 8px; }
.term { width: 36px; height: 36px; flex: none; }
.search-text { margin-left: 21px; width: 324px; color: #666; font-size: 28px; letter-spacing: -1px; }
.mag { width: 28px; height: 30px; flex: none; margin-left: -1px; }
.sa { margin-left: 8px; fill: #888; }
.wins { display: flex; align-items: center; margin-left: 33px; }
.wi { width: 30px; height: 30px; flex: none; margin-right: 50px; }

/* ribbon */
.ribbon { height: 141px; flex: none; background: #f8f8f8; display: grid; grid-template-columns: 178px 160px 146px 144px 110px 110px 130px 144px 88px 170px 162px 138px 128px 130px 150px 304px 284px 216px 212px 228px 106px 252px 1fr; overflow: hidden; }
.rb { position: relative; display: flex; flex-direction: column; align-items: center; padding-top: 8px; line-height: 38px; text-align: center; white-space: nowrap; font-size: 28px; letter-spacing: -1px; }
.rb.sep::before { content: ""; position: absolute; left: -1px; top: 2px; bottom: 6px; border-left: 1px solid #d4d4d4; }
.rb > span { margin-top: 2px; }
.ri { width: 40px; height: 38px; flex: none; }
.off { color: #b5b5b5; }
.dw { font-size: 7px; fill: #fff; letter-spacing: -.2px; font-family: "Liberation Sans", sans-serif; }
.rb-drop { position: absolute; left: 50%; margin-left: -5px; bottom: 10px; width: 10px; height: 7px; fill: #444; }
.rb-more { color: #666; font-size: 24px; padding: 28px 0 0 122px; }

/* command tabs + view toolbar */
.tabrow { height: 55px; flex: none; display: flex; align-items: center; background: #3c3c3c; }
.tabs { width: 1564px; height: 55px; flex: none; display: grid; grid-template-columns: 152px 114px 112px 128px 148px 342px 171px 89px 308px; background: #d4d4d4; border-bottom: 2px solid #999; }
.tab { display: flex; align-items: center; justify-content: center; color: #222; border-right: 1px solid #9c9c9c; border-top: 2px solid #8c8c8c; font-size: 29px; }
.tab.active { background: #f8f8f8; font-weight: 700; color: #333; border-top: 0; height: 55px; }
.viewbar { display: flex; align-items: center; padding-left: 97px; opacity: .75; }
.vi { width: 40px; height: 40px; flex: none; margin-right: 6px; }
.vi-a { font-size: 30px; fill: #2f7ca3; font-family: "Liberation Serif", serif; }
.vi-on { background: #808080; display: flex; border-radius: 4px; }
.vi-on .vi { margin: 0; }
.vi-on + .vd { margin-left: 8px; }
.vd { width: 12px; height: 8px; flex: none; fill: #888; margin: 0 7px 0 2px; }

/* work area */
.work { height: 1705px; flex: none; display: flex; }
.panel { width: 352px; flex: none; background: #f8f8f8; position: relative; display: flex; flex-direction: column; border-left: 1px solid #ccc; }
.panel-head { height: 50px; border-bottom: 1px solid #ccc; position: relative; }
.dimple { position: absolute; width: 12px; height: 7px; border-radius: 50%; background: #c8c8c8; border: 1px solid #999; }
.panel-head .dimple { left: 169px; top: 24px; }
.ptabs { height: 50px; margin-top: 8px; display: grid; grid-template-columns: 64px 60px 60px 60px 60px 47px; position: relative; }
.ptab { background: #d8d8d8; border-left: 1px solid #aaa; border-bottom: 1px solid #aaa; display: flex; align-items: center; justify-content: center; overflow: hidden; height: 42px; }
.ptab.on { background: #f8f8f8; border: 0; }
.pi { width: 34px; height: 32px; flex: none; }
.pnav { position: absolute; left: 293px; top: 14px; width: 57px; height: 28px; display: flex; background: #ececec; border: 1px solid #ccc; }
.pnav span { flex: 1; font-size: 20px; line-height: 26px; text-align: center; color: #111; border-right: 1px solid #ccc; }
.filter { margin: -8px 5px 0 4px; height: 62px; border: 1px solid #ccc; border-top: 0; display: flex; align-items: center; padding-left: 8px; }
.funnel { width: 34px; height: 38px; flex: none; }
.fa { margin-left: 8px; margin-top: 12px; }
.tree { list-style: none; margin: 2px 0 0; padding: 0; height: 770px; overflow: hidden; }
.tree li { height: 48px; position: relative; display: flex; align-items: center; white-space: nowrap; padding-left: 47px; overflow: hidden; font-size: 29px; letter-spacing: -.4px; color: #1b1b1b; }
.tree li.root { padding-left: 7px; }
.tree li.tw::before { content: ""; position: absolute; left: 18px; top: 17px; border-left: 8px solid #555; border-top: 6px solid transparent; border-bottom: 6px solid transparent; }
.tree li.c { padding-left: 49px; }
.ti { flex: none; }
.tree span { margin-left: 7px; }
.n { font-weight: 400; letter-spacing: 2.2px; margin-left: 2px; }
.asm { width: 30px; height: 32px; }
.cap1 { width: 36px; height: 30px; margin-left: 11px; }
.root span { margin-left: 6px; }
.fold { width: 36px; height: 32px; }
.badge { position: absolute; left: 54px; top: 19px; width: 24px; height: 16px; }
.pln { width: 22px; height: 33px; margin: 0 7px; }
.cmp { width: 32px; height: 32px; }
.capm { width: 36px; height: 30px; margin-left: 10px; }
.rollback { height: 6px; margin: 0 1px; background: #2d7fc1; width: 349px; }
.pscroll { margin-top: auto; height: 42px; margin-bottom: 5px; background: #f2f2f2; display: flex; align-items: center; border-bottom: 1px solid #ddd; }
.chev { width: 14px; height: 22px; flex: none; }
.pscroll .chev { margin-left: 13px; }
.pthumb { width: 96px; height: 42px; background: #c8c8c8; margin-left: 16px; }
.pscroll .chev.r { margin-left: 176px; }
.panel-handle { position: absolute; left: 349px; top: 777px; width: 25px; height: 97px; background: #f8f8f8; }
.panel-handle .dimple { left: 6px; top: 44px; }

.viewport { flex: 1; position: relative; background: radial-gradient(ellipse 6000px 1705px at 1500px 100%, #fcfcfc 0, #cacaca 30%, #3e3e3e 100%); overflow: hidden; }
.scene { display: block; width: 3488px; height: 1705px; }
.wood { fill: #c69a5f; }
.topline { fill: none; stroke: #111; stroke-width: 1.5; }
.bbox { fill: none; stroke: #8f8f20; stroke-width: 1.2; vector-effect: non-scaling-stroke; opacity: .85; }
.tri-pink { font-size: 20px; fill: #f07ab8; letter-spacing: 0; }
.ax { font-size: 24px; letter-spacing: 0; }
.ax.y { fill: #0d8a20; }
.ax.z { fill: #1414d8; }
.ax.x { fill: #e01414; }
.viewname { position: absolute; left: 14px; bottom: -3px; font-size: 33px; line-height: 40px; font-weight: 500; letter-spacing: -.8px; color: #111; }

/* sheet tabs + status */
.sheets { height: 44px; flex: none; display: flex; background: #f8f8f8; border-top: 2px solid #999; border-bottom: 2px solid #999; }
.sheet-nav { width: 98px; height: 24px; display: flex; background: #a9adbc; flex: none; margin-left: 2px; margin-right: -2px; font-size: 14px; }
.sheet-nav i { flex: 1; text-align: center; color: #8a8a9a; line-height: 24px; border-right: 1px solid #ccc; }
.sheet { background: #d2d2d2; border-left: 1px solid #999; text-align: center; font-size: 32px; line-height: 40px; letter-spacing: -.3px; flex: none; }
.sheet.on { background: #f8f8f8; font-weight: 700; color: #000; width: 130px; border-left: 1px solid #ddd; }
.s3d { width: 165px; }
.smo { width: 272px; border-right: 1px solid #999; padding-right: 6px; }
.status { height: 38px; flex: none; display: flex; background: #e6e6e6; overflow: hidden; line-height: 52px; white-space: nowrap; position: relative; font-size: 29px; letter-spacing: -.35px; }
.st-a { position: absolute; left: 3102px; }
.st-b { position: absolute; left: 3293px; }
.st-c { position: absolute; left: 3647px; }
.st-d { position: absolute; left: 3758px; font-size: 12px; }
.st-i { position: absolute; left: 3800px; top: 2px; width: 30px; height: 36px; }
.taskbar { height: 8px; flex: none; display: flex; }
.tb-d { width: 120px; background: #14242f; flex: none; }
.tb-l { width: 859px; background: #f6f6f6; border-top: 2px solid #bbb; flex: none; }
.tb-r { flex: 1; background: #14242f; }

/* panel hidden behind the dialog */
.behind { position: absolute; left: 3573px; top: 1812px; width: 267px; height: 209px; background: #fff; border-left: 2px solid #999; display: flex; flex-direction: column; border-bottom: 2px dashed #888; }
.update { padding: 13px 0 0 118px; font-size: 41px; line-height: 56px; color: #8a8a8a; letter-spacing: -1px; flex: 1; }
.bscroll { height: 44px; background: #f4f4f4; display: flex; align-items: center; padding-left: 28px; }
.bl { width: 0; height: 0; border-right: 10px solid #aaa; border-top: 10px solid transparent; border-bottom: 10px solid transparent; }
.bthumb { width: 133px; height: 38px; background: #bdbdbd; margin-left: 16px; }
.br { width: 0; height: 0; margin-left: 44px; border-left: 10px solid #444; border-top: 10px solid transparent; border-bottom: 10px solid transparent; }

/* dialog */
.dialog { position: absolute; left: 2514px; top: 189px; width: 1326px; height: 1623px; background: #f0f0f0; border: 2px solid #6c6c6c; border-right: 0; box-shadow: 0 6px 14px rgba(0,0,0,.3); font-size: 26.5px; letter-spacing: -.58px; }
.dlg-title { height: 68px; background: #fff; display: flex; align-items: center; position: relative; padding-left: 17px; }
.dlg-ic { width: 38px; height: 40px; flex: none; }
.dlg-name { margin-left: 6px; font-size: 29px; letter-spacing: -.5px; }
.dlg-min { width: 20px; height: 3px; background: #222; margin-left: 773px; margin-top: -6px; }
.dlg-max { width: 18px; height: 24px; border: 2px solid #ccc; margin-left: 95px; margin-top: -8px; }
.dlg-x { width: 20px; height: 20px; margin-left: 100px; margin-top: -8px; }
.dlg-body { padding: 15px 0 0 112px; position: relative; }
.sel-row { display: flex; align-items: flex-start; position: relative; }
.sel-ic { position: absolute; left: -73px; top: 22px; width: 33px; height: 34px; }
.selbox { width: 757px; height: 176px; background: #cde3f7; border: 2px solid #6fb4ea; padding: 3px 2px; line-height: 36px; }
.btn { font: inherit; letter-spacing: inherit; color: #111; background: #e1e1e1; border: 1px solid #adadad; padding: 3px 0 0; display: block; }
.opt { width: 186px; height: 62px; margin: 56px 0 0 84px; }
.ov-row { display: flex; margin-top: 15px; }
.ov { width: 482px; height: 62px; margin-left: 1px; }
.rc { width: 226px; height: 62px; margin-left: 46px; }
.chk { display: flex; align-items: center; height: 32px; white-space: nowrap; }
.box { width: 32px; height: 32px; flex: none; margin-right: 7px; border: 2px solid #333; background: #fff; }
.box svg { display: block; width: 28px; height: 28px; }
.c1 { margin-top: 31px; }
.c2 { margin-top: 29px; }
.c3 { margin-top: 32px; }
.report { display: flex; align-items: flex-start; margin-top: 17px; padding-left: 39px; height: 45px; white-space: nowrap; }
.report > span { width: 436px; flex: none; padding-top: 11px; line-height: 36px; }
.combo { width: 544px; height: 45px; background: #fff; border: 1px solid #8a8a8a; display: flex; align-items: center; justify-content: space-between; padding: 0 13px 2px 10px; }
.combo svg { width: 16px; height: 12px; flex: none; }
.results { width: 1127px; height: 905px; margin: 18px 0 0 -3px; border-top: 3px solid #8a8a8a; border-left: 2px solid #8a8a8a; border-right: 1px solid #f8f8f8; border-bottom: 2px solid #fbfbfb; display: flex; flex-direction: column; }
.res-top { flex: 1; display: flex; min-height: 0; }
.res-text { width: 1081px; flex: none; overflow: hidden; white-space: nowrap; line-height: 36.9px; padding-top: 2px; border-bottom: 1px solid #fafafa; }
.gap { height: 36.9px; }
.in1 { padding-left: 35px; }
.in2 { padding-left: 50px; }
.in3 { padding-left: 57px; display: grid; grid-template-columns: 343px 1fr; }
.vscroll { flex: 1; display: flex; flex-direction: column; align-items: center; }
.sa-up { width: 22px; height: 16px; margin-top: 10px; flex: none; }
.vthumb { width: 42px; height: 561px; background: #c8c8c8; margin-top: 17px; flex: none; }
.sa-dn { width: 22px; height: 16px; margin-top: 229px; flex: none; }
.hscroll { height: 41px; display: flex; align-items: center; padding-left: 12px; flex: none; }
.hthumb { width: 842px; height: 41px; background: #c8c8c8; margin: 0 168px 0 16px; flex: none; }
.dlg-btns { display: flex; margin: 21px 0 0 -3px; }
.help { width: 223px; height: 63px; }
.prt { width: 231px; height: 63px; margin-left: 148px; }
.cpy { width: 306px; height: 63px; margin-left: 118px; }
```
